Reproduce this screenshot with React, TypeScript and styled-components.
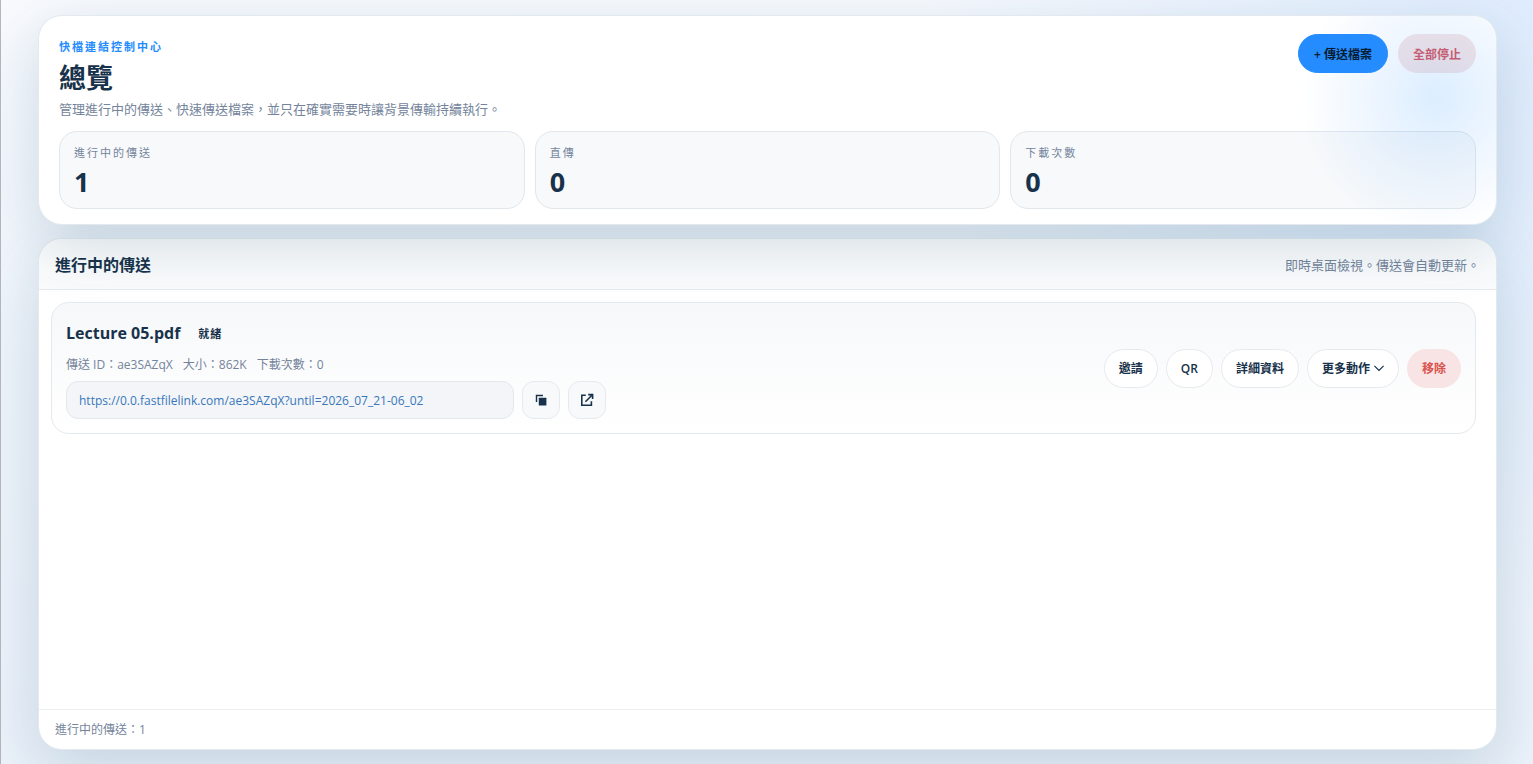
import React from 'react';
import styled, { createGlobalStyle, css } from 'styled-components';

const GlobalStyle = createGlobalStyle`
  * { box-sizing: border-box; }
  body {
    margin: 0;
    color: #17324a;
    font-family: "Open Sans", "Noto Sans CJK TC", sans-serif;
    font-size: 13px;
  }
  h1, h2, h3, p, dl, dd, ul { margin: 0; padding: 0; }
  button { font-family: inherit; cursor: pointer; }
`;

const Page = styled.div`
  display: flex;
  flex-direction: column;
  gap: 13px;
  min-height: 100vh;
  padding: 15px 36px 14px 37px;
  border-left: 1px solid #b4b7be;
  background:
    radial-gradient(circle at 100% 0, rgba(47, 140, 255, 0.12), transparent 36%),
    linear-gradient(180deg, #f8fafe 0%, #eef4fb 50%, #ebf2fa 100%);
`;

const panel = css`
  border: 1px solid #e3e9ee;
  border-radius: 24px;
  background: #fff;
  box-shadow: 0 18px 60px rgba(18, 72, 104, 0.18);
`;

const Hero = styled.header`
  ${panel}
  position: relative;
  padding: 18px 20px 15px;

  &::after {
    content: "";
    position: absolute;
    inset: 0;
    border-radius: inherit;
    background: radial-gradient(circle at calc(100% - 60px) 82px, rgba(36, 146, 255, 0.16), rgba(50, 146, 255, 0.08) 70px, transparent 136px);
    pointer-events: none;
  }
`;

const HeroTop = styled.div`
  display: flex;
  justify-content: space-between;
  align-items: flex-start;
  margin-bottom: 8px;
`;

const Eyebrow = styled.p`
  color: #248cff;
  font-size: 11px;
  font-weight: 700;
  line-height: 26px;
  letter-spacing: 2px;
`;

const Title = styled.h1`
  font-size: 27px;
  font-weight: 700;
  line-height: 36px;
`;

const Note = styled.p`
  color: #74849b;
  font-size: 13px;
  line-height: 28px;
`;

const Intro = styled.div`
  ${Note} {
    line-height: 27px;
  }
`;

const Actions = styled.div<{ $gap: number }>`
  display: flex;
  align-items: center;
  flex-shrink: 0;
  gap: ${({ $gap }) => $gap}px;
`;

type Tone = 'plain' | 'primary' | 'danger' | 'muted';

const tones = {
  plain: css`background: #fff; border-color: #e6eaef; color: #17324a;`,
  primary: css`padding: 0 15px; background: #248cff; border-color: #248cff; color: #06182b;`,
  danger: css`background: #f8e4e5; border-color: #f8e4e5; color: #d9534f;`,
  muted: css`background: #f6e5e6; border-color: #f6e5e6; color: #d6565f;`,
};

const Pill = styled.button<{ $tone?: Tone }>`
  display: flex;
  align-items: center;
  justify-content: center;
  gap: 4px;
  height: 39px;
  padding: 0 14px;
  border: 1px solid;
  border-radius: 20px;
  font-size: 12px;
  font-weight: 600;
  white-space: nowrap;
  ${({ $tone = 'plain' }) => tones[$tone]}
`;

const Stats = styled.dl`
  display: grid;
  grid-template-columns: repeat(3, 1fr);
  gap: 10px;
`;

const Stat = styled.div`
  padding: 12px 14px 6px;
  border: 1px solid #e2e7ec;
  border-radius: 18px;
  background: #f7f9fb;

  dt {
    color: #74849b;
    font-size: 11px;
    line-height: 18px;
    letter-spacing: 2px;
  }
  dd {
    font-size: 27px;
    font-weight: 700;
    line-height: 40px;
  }
`;

const Transfers = styled.section`
  ${panel}
  display: flex;
  flex: 1;
  flex-direction: column;
`;

const SectionHead = styled.div`
  display: flex;
  align-items: center;
  justify-content: space-between;
  padding: 12px 16px 10px;
  border-bottom: 1px solid #e6eaef;
  border-radius: 24px 24px 0 0;
  background: #fafbfc;
`;

const SectionTitle = styled.h2`
  font-size: 16px;
  line-height: 28px;
`;

const List = styled.ul`
  flex: 1;
  padding: 12px 20px 12px 12px;
  list-style: none;
`;

const Item = styled.li`
  display: flex;
  align-items: center;
  justify-content: space-between;
  gap: 24px;
  padding: 14px;
  border: 1px solid #e4e9ed;
  border-radius: 18px;
  background: linear-gradient(180deg, #f7f8fa, #ffffff);
`;

const Details = styled.div`
  flex: 0 1 540px;
  min-width: 0;
`;

const NameRow = styled.div`
  display: flex;
  align-items: center;
  gap: 18px;
`;

const FileName = styled.h3`
  font-size: 16px;
  line-height: 32px;
`;

const Status = styled.span`
  font-size: 11px;
  font-weight: 700;
  letter-spacing: 1px;
`;

const Meta = styled.p`
  display: flex;
  gap: 10px;
  color: #74849b;
  font-size: 12px;
  line-height: 32px;
`;

const LinkRow = styled.div`
  display: flex;
  gap: 8px;
`;

const ShareLink = styled.a`
  flex: 1;
  overflow: hidden;
  height: 38px;
  padding: 0 12px;
  border: 1px solid #e4e8ed;
  border-radius: 12px;
  background: #f3f5f8;
  color: #3977ba;
  font-size: 12px;
  line-height: 38px;
  text-decoration: none;
  text-overflow: ellipsis;
  white-space: nowrap;
`;

const IconButton = styled.button`
  display: grid;
  place-items: center;
  width: 38px;
  height: 38px;
  padding: 0;
  border: 1px solid #e6eaee;
  border-radius: 12px;
  background: #f8f9fb;
  color: #17324a;
`;

const Footer = styled.footer`
  padding: 0 16px;
  border-top: 1px solid #eceff1;
  color: #74849b;
  font-size: 12px;
  line-height: 39px;
`;

const CopyIcon = () => (
  <svg width="12" height="12" viewBox="0 0 12 12" aria-hidden="true">
    <path d="M1.5 8V1.5H8" fill="none" stroke="currentColor" strokeWidth="1.4" />
    <rect x="3.8" y="3.8" width="7.6" height="7.6" rx="0.5" fill="currentColor" />
  </svg>
);

const OpenIcon = () => (
  <svg width="14" height="14" viewBox="0 0 14 14" fill="none" stroke="currentColor" strokeWidth="1.6" aria-hidden="true">
    <path d="M5.8 2.3H1.8V12.2H11.4V8.2" />
    <path d="M8.2 1.6H12.6V6M12.4 1.8L5.4 8.8" />
  </svg>
);

const ChevronIcon = () => (
  <svg width="10" height="7" viewBox="0 0 10 7" fill="none" stroke="currentColor" strokeWidth="1.2" aria-hidden="true">
    <path d="M0.4 0.9L5 5.5L9.6 0.9" />
  </svg>
);

const stats = [
  { label: '進行中的傳送', value: 1 },
  { label: '直傳', value: 0 },
  { label: '下載次數', value: 0 },
];

const shareUrl = 'https://0.0.fastfilelink.com/ae3SAZqX?until=2026_07_21-06_02';

export default function App() {
  return (
    <>
      <GlobalStyle />
      <Page>
        <Hero>
          <HeroTop>
            <Intro>
              <Eyebrow>快檔連結控制中心</Eyebrow>
              <Title>總覽</Title>
              <Note>管理進行中的傳送、快速傳送檔案，並只在確實需要時讓背景傳輸持續執行。</Note>
            </Intro>
            <Actions $gap={10}>
              <Pill $tone="primary">+ 傳送檔案</Pill>
              <Pill $tone="muted">全部停止</Pill>
            </Actions>
          </HeroTop>
          <Stats>
            {stats.map(({ label, value }) => (
              <Stat key={label}>
                <dt>{label}</dt>
                <dd>{value}</dd>
              </Stat>
            ))}
          </Stats>
        </Hero>
        <Transfers>
          <SectionHead>
            <SectionTitle>進行中的傳送</SectionTitle>
            <Note>即時桌面檢視。傳送會自動更新。</Note>
          </SectionHead>
          <List>
            <Item>
              <Details>
                <NameRow>
                  <FileName>Lecture 05.pdf</FileName>
                  <Status>就緒</Status>
                </NameRow>
                <Meta>
                  <span>傳送 ID：ae3SAZqX</span>
                  <span>大小：862K</span>
                  <span>下載次數：0</span>
                </Meta>
                <LinkRow>
                  <ShareLink href={shareUrl}>{shareUrl}</ShareLink>
                  <IconButton aria-label="複製連結"><CopyIcon /></IconButton>
                  <IconButton aria-label="開啟連結"><OpenIcon /></IconButton>
                </LinkRow>
              </Details>
              <Actions $gap={8}>
                <Pill>邀請</Pill>
                <Pill>QR</Pill>
                <Pill>詳細資料</Pill>
                <Pill aria-haspopup="menu">更多動作<ChevronIcon /></Pill>
                <Pill $tone="danger">移除</Pill>
              </Actions>
            </Item>
          </List>
          <Footer>進行中的傳送：1</Footer>
        </Transfers>
      </Page>
    </>
  );
}
